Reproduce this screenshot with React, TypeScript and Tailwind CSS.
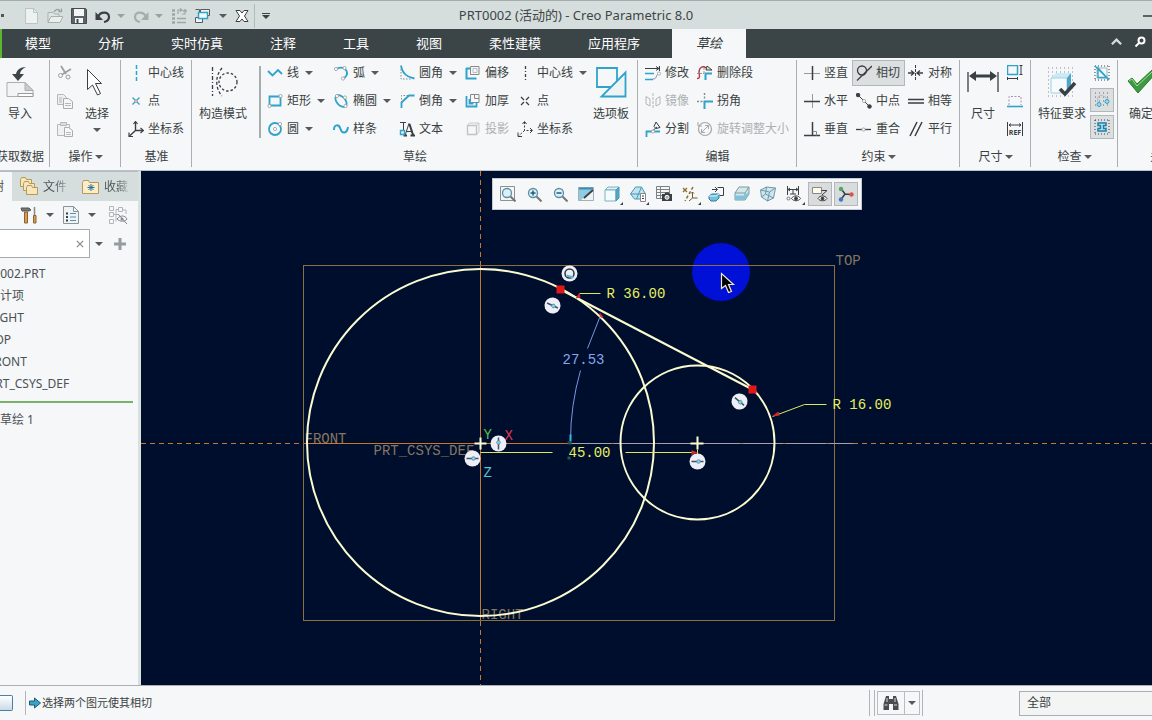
import * as React from "react";
import { clsx } from "clsx";

const BLUE = "#2fa3cc";
const INK = "#3a3f42";
const GREY = "#b3b7b9";

interface IconProps {
  className?: string;
  box?: number;
  children: React.ReactNode;
}

function Icon({ className = "size-4", box = 16, children }: IconProps) {
  return (
    <svg
      className={clsx("shrink-0", className)}
      viewBox={`0 0 ${box} ${box}`}
      fill="none"
      stroke={INK}
      aria-hidden="true"
    >
      {children}
    </svg>
  );
}

function Caret({ className = "text-[#555a5c]" }: { className?: string }) {
  return (
    <svg className={clsx("h-1 w-2 shrink-0", className)} viewBox="0 0 8 4" aria-hidden="true">
      <path d="M0 0h8L4 4z" fill="currentColor" />
    </svg>
  );
}

const dot = (x: number, y: number) => (
  <circle cx={x} cy={y} r="1.6" fill="#fff" stroke="#999" strokeWidth="0.8" />
);

const icons = {
  newFile: (
    <Icon><path d="M2.500.500h8l4 4v11h-12z" fill="#eef1f1" stroke="#bcc4c3" /><path d="M10.500.500v4h4" stroke="#bcc4c3" /></Icon>
  ),
  open: (
    <Icon>
      <path d="M1 14V4.500h5l1.500 1.500H12v3" stroke="#a9b1b0" fill="#dfe4e3" />
      <path d="M1 14.500l3-6h12l-3 6z" fill="#eceeed" stroke="#a9b1b0" />
      <path d="M7 4c1-3 4-3 6-1.500M14.500.5v3h-3" stroke="#9aa2a1" strokeWidth="1.300" />
    </Icon>
  ),
  save: (
    <Icon>
      <path d="M.5.5h14l1 1v14H.5z" fill="#5b6366" stroke="#454c4e" />
      <path d="M3 1h10v7H3z" fill="#f4f6f6" stroke="none" />
      <path d="M4 10h8v5H4z" fill="#f4f6f6" stroke="none" />
      <path d="M5.500 11h2v4h-2z" fill="#454c4e" stroke="none" />
    </Icon>
  ),
  undo: (
    <Icon><path d="M3 9C5 3.500 14 3 14 9c0 3-2 4.500-5 5" strokeWidth="2.200" /><path d="M.5 4v8H8z" fill={INK} stroke="none" /></Icon>
  ),
  redo: (
    <Icon><path d="M13 9C11 3.500 2 3 2 9c0 3 2 4.500 5 5" stroke="#a5adac" strokeWidth="2.200" /><path d="M15.500 4v8H8z" fill="#a5adac" stroke="none" /></Icon>
  ),
  regen: (
    <Icon>
      <path d="M1 2.500h3M1 6.500h3M1 10.500h3M1 14.500h3" stroke="#9fa7a6" strokeWidth="2.400" />
      <path d="M6 10.500h9M6 14.500h9" stroke="#9fa7a6" strokeWidth="1.500" />
      <path d="M7 6V2h3M9 .5L11 2 9 3.500M14 2v4h-3M16 3.500L14 1.500 12 3.500" stroke="#9fa7a6" strokeWidth="1.200" />
    </Icon>
  ),
  windows: (
    <Icon>
      <path d="M5.500 1.500h9v6h-9z" fill="#f1f4f4" stroke="#555c5e" />
      <path d="M.500 9.500h7v5h-7z" fill="#f1f4f4" stroke="#555c5e" />
      <path d="M.500 1.500h4v3" stroke="#555c5e" />
      <path d="M3.500 4.500h9v6h-9z" fill="#f8fbfb" stroke={BLUE} strokeWidth="1.500" />
    </Icon>
  ),
  closeWin: (
    <Icon>
      <path d="M2 2.500h4l2 2.500 2-2.500h4L10.500 8l3.500 5.500h-4L8 11l-2 2.500H2L5.500 8z" fill="#fff" stroke={INK} />
    </Icon>
  ),
  cut: (
    <Icon>
      <path d="M4 1l5 8M14 4L5 9.500" stroke="#9b9fa1" strokeWidth="1.800" />
      <circle cx="3.500" cy="10.500" r="2" stroke="#9b9fa1" /><circle cx="11" cy="12" r="2" stroke="#9b9fa1" />
    </Icon>
  ),
  copy: (
    <Icon>
      <path d="M.5 1.500h6l3 3v7h-9z" fill="#eee" stroke="#b5b9ba" />
      <path d="M6.500 5.500h5l4 3v7h-9z" fill="#f6f6f6" stroke="#a9adae" />
      <path d="M2 5h3M2 7h3M2 9h3M8 10.500h6M8 12.500h6" stroke="#b5b9ba" />
    </Icon>
  ),
  paste: (
    <Icon>
      <path d="M.5 3.500h12v11H.5z" fill="#f1f1f1" stroke="#b5b9ba" />
      <path d="M3.500 1.500h6v3h-6z" fill="#ddd" stroke="#b5b9ba" />
      <path d="M7.500 6.500h4l4 3v6h-8z" fill="#f8f8f8" stroke="#a9adae" />
      <path d="M9 11.500h5M9 13.500h5" stroke="#b5b9ba" />
    </Icon>
  ),
  centerBlue: <Icon><path d="M8.500 0v16" stroke={BLUE} strokeWidth="1.500" strokeDasharray="4 2" /></Icon>,
  pointBlue: (
    <Icon><path d="M4.500 4.500l7 7M11.500 4.500l-7 7" stroke={BLUE} strokeWidth="1.300" /><circle cx="8" cy="8" r="1.200" fill="#fff" stroke="#b77" strokeWidth="0.800" /></Icon>
  ),
  csys: (
    <Icon>
      <path d="M7.500 1v8.500H15M7.500 9.500L1.500 15" strokeWidth="1.400" />
      <path d="M5.500 3l2-2.500 2 2.500M12.500 7l3 2.500-3 2.500M1 11.500V15.500h4" strokeWidth="1.200" />
    </Icon>
  ),
  line: <Icon><path d="M1 6l4.500 4.500L11 5l4 4" stroke={BLUE} strokeWidth="1.800" /></Icon>,
  rect: <Icon><path d="M2.500 3.500h11v9h-11z" stroke={BLUE} strokeWidth="1.800" />{dot(13.500, 3)}{dot(2.500, 13)}</Icon>,
  circle: <Icon><circle cx="8" cy="8" r="6" stroke={BLUE} strokeWidth="1.800" />{dot(8, 8)}{dot(13, 3)}</Icon>,
  arc: <Icon><path d="M4 3.500C12 .5 18 8 10.500 13.500" stroke={BLUE} strokeWidth="1.800" />{dot(3, 4)}{dot(11.500, 3)}{dot(10, 13.500)}</Icon>,
  ellipse: (
    <Icon><ellipse cx="8" cy="8" rx="7" ry="4.200" transform="rotate(48 8 8)" stroke={BLUE} strokeWidth="1.800" />{dot(4, 3)}{dot(12, 4.500)}{dot(12.500, 13)}</Icon>
  ),
  spline: <Icon><path d="M1 9C1 3 6 3 7.500 8S14 13 15 6" stroke={BLUE} strokeWidth="2" /></Icon>,
  fillet: (
    <Icon><path d="M2 .5C3 8 7 12 15.500 13.500" stroke={BLUE} strokeWidth="1.800" /><path d="M2 4v10h10" strokeDasharray="1.500 1.500" stroke="#888" /></Icon>
  ),
  chamfer: (
    <Icon><path d="M15.500 2.500H10L2.500 9.500V15" stroke={BLUE} strokeWidth="1.800" /><path d="M9 2.500H2.500V9" strokeDasharray="1.500 1.500" stroke="#888" /></Icon>
  ),
  text: (
    <Icon>
      <path d="M1 1.500h6M4.500 1.500V9M6 14.500l4-12 4.500 12M7.500 10.500h6" strokeWidth="1" />
      <path d="M10.500 3l3.500 11M4.500 14.500h3.500M11.500 14.500h4.500" strokeWidth="2" />
      <path d="M1.500 9.500h4v4h-4z" fill="#dff0f6" stroke={BLUE} strokeWidth="1.400" />
    </Icon>
  ),
  offset: (
    <Icon><path d="M5.500 1.500h8.500v8H5.500z" stroke="#888" /><path d="M8 3.500h4v4H8z" stroke="#bbb" /><path d="M1.500 3v10.500h10M1 3.500h4" stroke={BLUE} strokeWidth="2" /></Icon>
  ),
  thicken: (
    <Icon><path d="M5.500 1.500h8.500v8H5.500zM9.500 1.500v4h4.500" stroke="#888" /><path d="M1.500 3v10.500h10V9M4.500 6v4.500h4" stroke={BLUE} strokeWidth="1.800" /></Icon>
  ),
  project: (
    <Icon><path d="M2.500 4.500h9v9h-9z" stroke="#c0c4c5" strokeWidth="1.400" /><path d="M2.500 4.500l2-2.500h9.500v9l-2.500 2.500M11.500 4.500L14 2" stroke="#c9cccd" /></Icon>
  ),
  center: <Icon><path d="M8.500 1v14" strokeDasharray="3 2 1 2" strokeWidth="1.300" /></Icon>,
  point: <Icon><path d="M4 4l3 3M12 4L9 7M4 12l3-3M12 12L9 9" strokeWidth="1.300" /></Icon>,
  csysDash: (
    <Icon>
      <path d="M7.500 1v8.500H15M7.500 9.500L1.500 15" strokeDasharray="2 1.500" />
      <path d="M5.500 3l2-2.500 2 2.500M13 7l2.500 2.500L13 12M1 11.500V15.500h4" />
    </Icon>
  ),
  modify: (
    <Icon>
      <path d="M0 3.500h14M14.500 1v5M11 1.500l3 2-3 2" />
      <path d="M0 8.500h9M0 14.500h8" stroke={BLUE} strokeWidth="1.700" />
      <path d="M8 14c5 0 2-5 6-5" stroke="#888" />{dot(14, 8.500)}
    </Icon>
  ),
  mirror: (
    <Icon><path d="M1 3.500l4 2.500v7l-4-2zM15 3.500L11 6v7l4-2z" stroke={GREY} /><path d="M8 0v16" stroke={GREY} strokeDasharray="3 1" /></Icon>
  ),
  divide: (
    <Icon><path d="M1.500 16v-5.500H15" stroke={BLUE} strokeWidth="1.800" /><path d="M6 11l6-5M9 5.500l2-4.500 4 5.500-4 1z" />{dot(8, 10.500)}</Icon>
  ),
  delSeg: (
    <Icon>
      <path d="M0 13.500c4 0 2-4 2-6C2 2 6 .5 9 3" stroke="#a8323c" strokeWidth="1.300" />
      <path d="M9 5l1-4 5 4z" fill="#f7e4c4" />
      <path d="M8.500 15V8.500H15" stroke={BLUE} strokeWidth="2" /><path d="M0 8.500h7M7 3v5" stroke="#999" strokeDasharray="2 1" />
    </Icon>
  ),
  corner: (
    <Icon><path d="M7.500 16V8.500H16" stroke={BLUE} strokeWidth="2" /><path d="M0 8.500h6M7.500 0v7" stroke="#888" strokeDasharray="2 1.500" strokeWidth="1.400" /></Icon>
  ),
  rotate: (
    <Icon><circle cx="8" cy="8" r="6.500" stroke="#a5a9ab" strokeWidth="1.200" /><path d="M4.500 11.500l7-7M8 4.500h3.500V8M4.500 8v3.500H8M1 1v4h4" stroke="#a5a9ab" /></Icon>
  ),
  vertical: <Icon><path d="M0 8.500h16" stroke="#999" /><path d="M8.500 1v14" strokeWidth="1.500" /></Icon>,
  horizontal: <Icon><path d="M8.500 1v14" stroke="#999" /><path d="M0 8.500h16" strokeWidth="1.500" /></Icon>,
  perp: <Icon><path d="M8.500 1v13.500M0 14.500h16" strokeWidth="1.500" /><path d="M8.500 10.500h4v4" stroke="#888" /></Icon>,
  tangent: <Icon><circle cx="6" cy="5.500" r="4.500" strokeWidth="1.300" /><path d="M1 15.500L16 1" strokeWidth="1.300" /></Icon>,
  midpoint: (
    <Icon><path d="M2 2l12 12" /><circle cx="2" cy="2" r="1.800" fill={INK} /><circle cx="13.500" cy="13.500" r="1.800" fill={INK} />{dot(8, 8)}</Icon>
  ),
  coincident: <Icon><path d="M0 8.500h15" strokeWidth="1.300" />{dot(7.500, 8.500)}</Icon>,
  symmetric: (
    <Icon><path d="M7.500 0v16" strokeDasharray="3 1" /><path d="M0 8h5M15 8h-5M3 5.500L6 8l-3 2.500M12 5.500L9 8l3 2.500" strokeWidth="1.300" /></Icon>
  ),
  equal: <Icon><path d="M0 6.500h16M0 10h16" strokeWidth="1.500" /></Icon>,
  parallel: <Icon><path d="M2 15L9 1M7 15l7-14" strokeWidth="1.500" /></Icon>,
  perimeter: (
    <Icon><path d="M.5.500h10v9H.500z" stroke={BLUE} strokeWidth="1.500" /><path d="M14 .500v9M12.500.500h3M12.500 9.500h3M.500 13.500h10M.500 12v3M10.500 12v3" /></Icon>
  ),
  baseline: (
    <Icon><path d="M2 12V3.500h12V12" stroke="#a78fb8" strokeDasharray="2 1.500" /><path d="M0 13.500h16" stroke={BLUE} strokeWidth="1.600" /></Icon>
  ),
  ref: (
    <Icon>
      <path d="M.5 1v14M15.500 1v14M2 4h12M4 2.500L2 4l2 1.500M12 2.500L14 4l-2 1.500" />
      <text x="8" y="14" textAnchor="middle" fontSize="7" fontWeight="700" fill={INK} stroke="none">REF</text>
    </Icon>
  ),
  shade: (
    <Icon><path d="M1 1h14M1 15h14M1 1v14M15 1v14" strokeDasharray="1 2" /><path d="M3 3h10v10H3z" stroke="#9bb8c4" /><path d="M4 3v9.500h9zM1 1l14 14" stroke={BLUE} strokeWidth="1.400" /></Icon>
  ),
  openEnds: (
    <Icon>
      <path d="M1 1h14M1 5h14M1 9h14M1 13h14" stroke="#666" strokeDasharray="1 3" />
      <path d="M5 12C1 6 6 2 9 4s5 1 5 5" stroke="#aeb6ba" />
      <circle cx="5" cy="12.500" r="2" fill="#9fd8ee" stroke={BLUE} /><circle cx="13" cy="9.500" r="2" fill="#9fd8ee" stroke={BLUE} />
    </Icon>
  ),
  overlap: (
    <Icon>
      <path d="M1 1h14M1 15h14M1 1v14M15 1v14" strokeDasharray="1 2" />
      <path d="M4 4h8v2.500H9.500v3H12V12H4V9.500h2.500v-3H4z" fill="#bfe6f4" stroke="#1b7fa8" strokeWidth="1.500" />
    </Icon>
  ),
};

const lens = (
  <>
    <circle cx="7" cy="7" r="4.500" fill="#d9f1f8" stroke="#5d8ea3" strokeWidth="1.300" />
    <path d="M10.500 10.500l5 5" stroke="#777" strokeWidth="2" />
  </>
);

const viewTools = [
  { name: "重新调整", icon: <Icon><path d="M.5.500h14v14H.500z" fill="#f5f7f7" stroke="#8b9194" />{lens}</Icon> },
  { name: "放大", icon: <Icon>{lens}<path d="M4.500 7h5M7 4.500v5" stroke="#1d5f7c" strokeWidth="1.500" /></Icon> },
  { name: "缩小", icon: <Icon>{lens}<path d="M4.500 7h5" stroke="#1d5f7c" strokeWidth="1.500" /></Icon> },
  {
    name: "重画",
    icon: <Icon><path d="M.5 1.500h15v13H.500z" fill="#8fcbe2" stroke="#a3b0b5" /><path d="M15 4v10H3z" fill="#eef3f4" stroke="none" /><path d="M6 12L15 4" strokeWidth="1.800" /><path d="M1 2.500h14" stroke="#3d8db0" strokeWidth="2" /></Icon>,
  },
  {
    name: "显示样式", more: true,
    icon: <Icon><path d="M1 4l3-3h11l-3 3z" fill="#d9f1f8" stroke="#7fb2c5" /><path d="M1 4h11v11H1z" fill="#f3fbfd" stroke="#7fb2c5" /><path d="M12 4l3-3v11l-3 3z" fill="#55a9c8" stroke="#4897b5" /></Icon>,
  },
  {
    name: "已保存方向", more: true,
    icon: <Icon><path d="M.500 8l5-7h6l4 7-3 5h-8z" fill="#bfe4f0" stroke="#4a96b3" /><path d="M.500 8h8l3-7M8.500 8l-2 5M8.500 8h7" stroke="#4a96b3" /><path d="M10.500 7.500h5v8h-5z" fill="#fff" stroke="#888" /><path d="M12 10h2M12 12.500h2" /></Icon>,
  },
  {
    name: "视图管理器",
    icon: <Icon><path d="M.500.500h13v12H.500zM.500 3.500h13M.500 6.500h13M.500 9.500h13M4.500.500v12" fill="#f5f5f5" stroke="#7b8184" /><path d="M6 8h2.500l1-1.500h3l1 1.500H16v7H6z" fill={INK} stroke="none" /><circle cx="11" cy="11.300" r="2" fill="#aaa" stroke="#fff" /></Icon>,
  },
  {
    name: "基准显示", more: true,
    icon: <Icon><path d="M1 2l4 4M5 2L1 6" stroke="#8a6d2f" strokeWidth="1.300" /><path d="M11 1L3 15" stroke="#8a6d2f" strokeDasharray="3 2" strokeWidth="1.500" /><path d="M10.500 6v6h5M10.500 12L7 15M9 7.500L10.500 6 12 7.500" stroke="#6e5a2a" /></Icon>,
  },
  {
    name: "草绘视图",
    icon: <Icon><path d="M9.500 1.500h6v8h-4M4 3.500h5M7 1l2.500 2.500L7 6" /><path d="M1 10l3-2h7v4l-3 3H3l-2-2z" fill="#73c1dc" stroke="#2f7f9e" /><path d="M1 10h7l3-2" stroke="#e4f6fb" /></Icon>,
  },
  {
    name: "剖面",
    icon: <Icon><path d="M1 7l4-6h10v7l-4 6H1z" fill="#d3e7ed" stroke="#8199a2" /><path d="M1 7h10l4-6M11 7v7" stroke="#8199a2" /><path d="M1 9.500h10L15 5v3.500L11 14H1z" fill="#7fc3da" stroke="none" /></Icon>,
  },
  {
    name: "透视图",
    icon: <Icon><path d="M.500 4l6-3 9 1-2 10-6 3-6-4z" fill="#cfe4eb" stroke="#6d9aab" /><path d="M.500 4l9 2 6-4M9.500 6l-2 9M6.500 1l-1 7 8 4M5.500 8l-4 3" stroke="#6d9aab" /></Icon>,
  },
  {
    name: "草绘器显示", more: true,
    icon: <Icon><path d="M1.500 0v9M12.500 0v9M2 3.500h10M4 2L2 3.500 4 5M10 2l2 1.500L10 5M4 8h6M7 4v4" /><path d="M5.500 12.500c2-3.500 7-3.500 9 0-2 3-7 3-9 0z" fill="#fff" /><circle cx="10" cy="12.500" r="1.500" fill={INK} /><circle cx="2.500" cy="12.500" r="1.500" stroke="#777" /></Icon>,
  },
  {
    name: "注释显示", active: true,
    icon: <Icon><path d="M.500 1.500h9v6h-9z" fill="#fffbe8" stroke="#888" /><path d="M9.500 4.500H15L10 9" /><path d="M6 12.500c2-3.500 7-3.500 9 0-2 3-7 3-9 0z" fill="#fff" /><circle cx="10.500" cy="12.500" r="1.500" fill={INK} /></Icon>,
  },
  {
    name: "旋转中心", active: true,
    icon: <Icon><path d="M3 2.500l4 5.500 6 .500M7 8l-4 5.500" strokeWidth="1.500" /><circle cx="3" cy="3" r="2.200" fill="#4fa85c" stroke="none" /><circle cx="13.500" cy="8.500" r="2.200" fill="#d8564c" stroke="none" /><circle cx="3" cy="13.500" r="2.200" fill="#3f77c4" stroke="none" /></Icon>,
  },
];

interface ToolProps {
  icon: React.ReactNode;
  label: string;
  caret?: boolean;
  active?: boolean;
  disabled?: boolean;
}

function Tool({ icon, label, caret, active, disabled }: ToolProps) {
  return (
    <button
      type="button"
      disabled={disabled}
      className={clsx(
        "-ml-1 flex h-[26px] items-center gap-1 self-center justify-self-start border pr-1 pl-[3px] text-xs whitespace-nowrap",
        active ? "border-[#b3b7b9] bg-[#dcdfe0]" : "border-transparent",
        disabled ? "text-[#adb1b3]" : "text-[#3a3f42]",
      )}
    >
      {icon}
      {label}
      {caret && <span className="ml-[2px] flex"><Caret /></span>}
    </button>
  );
}

function Column({ className, children }: { className?: string; children: React.ReactNode }) {
  return <div className={clsx("grid shrink-0 grid-rows-3", className)}>{children}</div>;
}

interface GroupProps {
  title: string;
  caret?: boolean;
  className: string;
  last?: boolean;
  children: React.ReactNode;
}

function Group({ title, caret, className, last, children }: GroupProps) {
  return (
    <section aria-label={title} className={clsx("relative flex shrink-0 flex-col", className)}>
      <div className="flex h-21 w-full shrink-0">{children}</div>
      <div className="flex w-full flex-1 items-center justify-center gap-[2px] text-xs whitespace-nowrap">
        {title}
        {caret && <Caret />}
      </div>
      {!last && <span className="absolute top-px right-0 h-[107px] w-px bg-[#aab0b1]" />}
    </section>
  );
}

function BigTool({ icon, label, caret, className }: { icon: React.ReactNode; label: string; caret?: boolean; className?: string }) {
  return (
    <button type="button" className={clsx("flex h-full shrink-0 flex-col items-center pt-[3px] text-xs whitespace-nowrap", className)}>
      <span className="flex h-10 items-center">{icon}</span>
      <span className="leading-6">{label}</span>
      {caret && <span className="mt-[2px] flex"><Caret /></span>}
    </button>
  );
}

function TitleBar() {
  const quick = "flex items-center justify-center";
  return (
    <header className="grid h-[29px] shrink-0 grid-cols-[1fr_auto_1fr] items-center border-t border-[#a4abaa] bg-[#d5dedc] pt-px">
      <div className="flex items-center">
        <span className="ml-px size-[3px] bg-[#555]" />
        <button type="button" aria-label="新建" className={clsx(quick, "ml-[19px] w-4")}>{icons.newFile}</button>
        <button type="button" aria-label="打开" className={clsx(quick, "ml-2 w-4")}>{icons.open}</button>
        <button type="button" aria-label="保存" className={clsx(quick, "ml-2 w-4")}>{icons.save}</button>
        <button type="button" aria-label="撤消" className={clsx(quick, "ml-2 gap-[6px]")}>{icons.undo}<Caret className="text-[#9aa1a0]" /></button>
        <button type="button" aria-label="重做" className={clsx(quick, "ml-2 gap-[6px]")}>{icons.redo}<Caret className="text-[#9aa1a0]" /></button>
        <button type="button" aria-label="重新生成" className={clsx(quick, "ml-2 w-4")}>{icons.regen}</button>
        <button type="button" aria-label="窗口" className={clsx(quick, "ml-2 gap-2")}>{icons.windows}<Caret /></button>
        <button type="button" aria-label="关闭" className={clsx(quick, "ml-[7px] w-4")}>{icons.closeWin}</button>
        <span className="ml-1 h-6 w-px bg-[#b3bbba]" />
        <button type="button" aria-label="自定义快速访问工具栏" className={clsx(quick, "ml-[7px] flex-col gap-px")}>
          <span className="h-px w-2 bg-[#3a3f42]" />
          <Caret className="text-[#3a3f42]" />
        </button>
      </div>
      <h1 className="text-[13px] text-[#3e4547]">PRT0002 (活动的) - Creo Parametric 8.0</h1>
      <button type="button" aria-label="最小化" className="flex h-5 w-3 items-center justify-end justify-self-end">
        <span className="h-[2px] w-[9px] bg-[#5c6365]" />
      </button>
    </header>
  );
}

const tabs = ["模型", "分析", "实时仿真", "注释", "工具", "视图", "柔性建模", "应用程序"];

function RibbonTabs() {
  return (
    <nav className="flex h-[29px] shrink-0 bg-[#3b4446] text-[13px] text-white">
      <span className="w-[2px] bg-[#5cb531]" />
      {tabs.map((tab) => (
        <button key={tab} type="button" className="pt-px pr-6 pl-[23px] whitespace-nowrap">{tab}</button>
      ))}
      <button type="button" className="ml-2 w-[74px] bg-[#f5f7f8] pt-px text-[#33393b] italic">草绘</button>
      <div className="ml-auto flex items-center gap-3 pr-[6px]">
        <button type="button" aria-label="最小化功能区" className="pb-1">
          <Icon className="h-3 w-[11px]" box={12}><path d="M1 8.500l5-5 5 5" stroke="#d8dcdc" strokeWidth="2.500" /></Icon>
        </button>
        <button type="button" aria-label="命令搜索" className="pb-1">
          <Icon className="size-3" box={12}><circle cx="7.500" cy="4.500" r="3" stroke="#fff" strokeWidth="2" /><path d="M5 7L1.500 10.500" stroke="#fff" strokeWidth="2" /></Icon>
        </button>
      </div>
    </nav>
  );
}

function Ribbon() {
  return (
    <div className="flex h-[113px] shrink-0 overflow-hidden border-b border-[#b9c3d0] bg-[#f5f7f8] pt-px text-[#3a3f42]">
      <Group title="获取数据" className="w-[50px] items-end [&>div]:justify-end [&>div]:pr-[6px]">
        <BigTool
          label="导入"
          className="pr-2"
          icon={
            <Icon className="size-8" box={32}>
              <path d="M3 16.500h18l8 8v6H3z" fill="#f3f4f4" stroke="#aaafb1" /><path d="M21 16.500v8h8z" fill="#ccc" stroke="#aaafb1" />
              <path d="M14 27.500h15v3H14z" fill="#fff" stroke="#999" />
              <path d="M22 1c-6 0-9 3-10 7H8l6 7 6-7h-4c0-3 2-5 6-7z" fill="#3f4446" stroke="none" />
            </Icon>
          }
        />
      </Group>
      <Group title="操作" caret className="w-[71px]">
        <Column className="ml-[7px] w-[26px] items-center">
          {icons.cut}{icons.copy}{icons.paste}
        </Column>
        <BigTool
          label="选择"
          caret
          icon={<Icon className="size-7" box={28}><path d="M4.500 1.500v20l5-4.500 5 10 3-1.500-5-10h6z" fill="#fff" /></Icon>}
        />
      </Group>
      <Group title="基准" className="w-[71px]">
        <Column className="ml-[7px]">
          <Tool icon={icons.centerBlue} label="中心线" />
          <Tool icon={icons.pointBlue} label="点" />
          <Tool icon={icons.csys} label="坐标系" />
        </Column>
      </Group>
      <Group title="草绘" className="w-[446px]">
        <BigTool
          label="构造模式"
          className="ml-[7px]"
          icon={
            <Icon className="size-8" box={32}>
              <path d="M5.500 1v29" strokeDasharray="4 2 1 2" strokeWidth="1.300" /><path d="M15 2c-7 8-7 20 0 28" strokeDasharray="3 2" strokeWidth="1.300" />
              <circle cx="21" cy="16" r="9" strokeDasharray="2.500 2" strokeWidth="1.300" />
            </Icon>
          }
        />
        <span className="mx-[6px] mt-[7px] ml-3 h-18 w-[2px] bg-[#a7acae]" />
        <Column className="w-[66px]">
          <Tool icon={icons.line} label="线" caret />
          <Tool icon={icons.rect} label="矩形" caret />
          <Tool icon={icons.circle} label="圆" caret />
        </Column>
        <Column className="w-[66px]">
          <Tool icon={icons.arc} label="弧" caret />
          <Tool icon={icons.ellipse} label="椭圆" caret />
          <Tool icon={icons.spline} label="样条" />
        </Column>
        <Column className="w-[66px]">
          <Tool icon={icons.fillet} label="圆角" caret />
          <Tool icon={icons.chamfer} label="倒角" caret />
          <Tool icon={icons.text} label="文本" />
        </Column>
        <Column className="w-[52px]">
          <Tool icon={icons.offset} label="偏移" />
          <Tool icon={icons.thicken} label="加厚" />
          <Tool icon={icons.project} label="投影" disabled />
        </Column>
        <Column className="w-[76px]">
          <Tool icon={icons.center} label="中心线" caret />
          <Tool icon={icons.point} label="点" />
          <Tool icon={icons.csysDash} label="坐标系" />
        </Column>
        <BigTool
          label="选项板"
          icon={
            <Icon className="size-8" box={32}>
              <path d="M2 2h20v19H2z" stroke={BLUE} strokeWidth="1.800" /><path d="M30.500 6.500v24h-24z" fill="#eef4f6" stroke={BLUE} strokeWidth="1.800" />
            </Icon>
          }
        />
      </Group>
      <Group title="编辑" className="w-[159px]">
        <Column className="ml-[7px] w-[52px]">
          <Tool icon={icons.modify} label="修改" />
          <Tool icon={icons.mirror} label="镜像" disabled />
          <Tool icon={icons.divide} label="分割" />
        </Column>
        <Column>
          <Tool icon={icons.delSeg} label="删除段" />
          <Tool icon={icons.corner} label="拐角" />
          <Tool icon={icons.rotate} label="旋转调整大小" disabled />
        </Column>
      </Group>
      <Group title="约束" caret className="w-[163px]">
        <Column className="ml-[7px] w-[52px]">
          <Tool icon={icons.vertical} label="竖直" />
          <Tool icon={icons.horizontal} label="水平" />
          <Tool icon={icons.perp} label="垂直" />
        </Column>
        <Column className="w-[52px]">
          <Tool icon={icons.tangent} label="相切" active />
          <Tool icon={icons.midpoint} label="中点" />
          <Tool icon={icons.coincident} label="重合" />
        </Column>
        <Column>
          <Tool icon={icons.symmetric} label="对称" />
          <Tool icon={icons.equal} label="相等" />
          <Tool icon={icons.parallel} label="平行" />
        </Column>
      </Group>
      <Group title="尺寸" caret className="w-[71px]">
        <BigTool
          label="尺寸"
          className="ml-[7px]"
          icon={
            <Icon className="size-8" box={32}>
              <path d="M1 6v20M31 6v20" strokeWidth="1.300" /><path d="M6 10h20" strokeWidth="3" />
              <path d="M2 10l7-5v10zM30 10l-7-5v10z" fill={INK} stroke="none" />
            </Icon>
          }
        />
        <Column className="ml-2 items-center">
          {icons.perimeter}{icons.baseline}{icons.ref}
        </Column>
      </Group>
      <Group title="检查" caret className="w-[87px]">
        <BigTool
          label="特征要求"
          className="ml-[7px]"
          icon={
            <Icon className="size-8" box={32}>
              <path d="M2 2h28M2 6h28M2 10h28M2 14h28M2 18h28M2 22h28M2 26h28M2 30h28" stroke="#8c86b0" strokeDasharray="1 3" />
              <path d="M5 12l5-5h15l-4 5z" fill="#c9ebf5" stroke="none" /><path d="M5 12h16v15H5z" fill="#f6fcfd" stroke="#a3cfdd" /><path d="M21 12l4-5v15l-4 5z" fill="#4ba6c8" stroke="none" />
              <path d="M14 23l5 5 10-11" strokeWidth="3.500" />
            </Icon>
          }
        />
        <div className="ml-1 flex flex-col gap-[3px] pt-[2px]">
          <button type="button" aria-label="着色封闭环" className="flex size-6 items-center justify-center">{icons.shade}</button>
          <button type="button" aria-label="突出显示开放端" className="flex size-6 items-center justify-center border border-[#b3b7b9] bg-[#dcdfe0]">{icons.openEnds}</button>
          <button type="button" aria-label="重叠几何" className="flex size-6 items-center justify-center border border-[#b3b7b9] bg-[#dcdfe0]">{icons.overlap}</button>
        </div>
      </Group>
      <Group title="关闭" last className="min-w-[88px] flex-1">
        <BigTool
          label="确定"
          className="ml-[7px]"
          icon={<Icon className="size-8" box={32}><path d="M3 15l4-3 5 6L27 4l4 3-18 20z" fill="#3c9a45" stroke="#2a7a34" /><path d="M4 15l3-2 5 7L27 6" stroke="#9fdc8a" /></Icon>}
        />
      </Group>
    </div>
  );
}

const treeRows = [
  { label: "PRT0002.PRT", indent: "-ml-7" },
  { label: "设计项", indent: "-ml-3" },
  { label: "RIGHT", indent: "-ml-3" },
  { label: "TOP", indent: "-ml-3" },
  { label: "FRONT", indent: "-ml-3" },
  { label: "PRT_CSYS_DEF", indent: "-ml-3" },
];

function Folder({ x, y }: { x: number; y: number }) {
  return <path transform={`translate(${x} ${y})`} d="M.5 2.500l1-2h4l1 2h5v7H.500z" fill="#f8e6b8" stroke="#b59a5c" />;
}

function ModelTree() {
  return (
    <aside className="flex w-[141px] shrink-0 flex-col overflow-hidden border-r-[3px] border-[#d9e1df] bg-[#f5f7f8] text-xs text-[#4b5154]">
      <div className="flex h-[30px] shrink-0 border-t border-[#b4bbba] bg-[#d5dedc]">
        <button type="button" className="flex w-3 items-center justify-end overflow-hidden bg-[#f5f7f8] pr-2 whitespace-nowrap">模型树</button>
        <button type="button" className="ml-2 flex w-[46px] items-center gap-1 overflow-hidden whitespace-nowrap">
          <Icon className="size-[19px]" box={19}><Folder x={0} y={0} /><Folder x={3} y={4} /><Folder x={6} y={8} /></Icon>
          <span className="bg-linear-to-r from-[#4b5154] from-50% to-[#b5bdbb] bg-clip-text text-transparent">文件</span>
        </button>
        <button type="button" className="ml-4 flex w-[46px] items-center gap-1 overflow-hidden whitespace-nowrap">
          <Icon className="size-[18px]" box={18}>
            <path d="M.500 4.500l1-2h5l1 2h9v11H.500z" fill="#fbedc8" stroke="#b59a5c" />
            <path d="M9 6v7M5.500 9.500h7M6.500 7l5 5M11.500 7l-5 5" stroke="#2b6f9a" />
          </Icon>
          <span className="bg-linear-to-r from-[#4b5154] from-50% to-[#b5bdbb] bg-clip-text text-transparent">收藏</span>
        </button>
      </div>
      <div className="flex h-7 shrink-0 items-center pl-5">
        <button type="button" aria-label="设置" className="flex items-center gap-2">
          <Icon className="size-[18px]" box={18}>
            <path d="M1 2h8l2 2-2 1H2z" fill="#777" stroke="#555" /><path d="M4.500 6h3v11h-3z" fill="#d99b52" stroke="#8d6531" />
            <path d="M14.500 1v8" stroke="#888" strokeWidth="1.500" /><path d="M13.500 9.500h2.500v7.500h-2.500z" fill="#d99b52" stroke="#8d6531" />
          </Icon>
          <Caret />
        </button>
        <button type="button" aria-label="显示" className="ml-2 flex items-center gap-2">
          <Icon className="size-[18px]" box={18}>
            <path d="M1.500.500h10l5 5v12h-15z" fill="#eef3f6" stroke="#8b9499" /><path d="M11.500.500v5h5" stroke="#8b9499" />
            <path d="M8 7.500h6M8 11h6M8 14.500h6" stroke="#5b8fb0" /><path d="M4 7.500h2M4 11h2M4 14.500h2" strokeWidth="2" />
          </Icon>
          <Caret />
        </button>
        <button type="button" aria-label="树过滤器" className="ml-3">
          <Icon className="size-5" box={20}>
            <path d="M1.500 1.500h4v4h-4zM1.500 7.500h4v4h-4zM1.500 14.500h4v4h-4zM10.500 2.500h4v4h-4zM5.500 9.500h5M8 4.500v12M8 4.500h2M15 5h3v4" stroke="#b2b6b8" />
            <path d="M9 14c3-4 8-4 10 0-2 3-7 3-10 0zM10 9l9 10" stroke="#85898b" /><circle cx="14" cy="14" r="1.500" fill="#85898b" stroke="none" />
          </Icon>
        </button>
      </div>
      <div className="flex h-[29px] shrink-0 items-center">
        <div className="flex h-full w-[90px] items-center border border-l-0 border-[#a5abad] bg-white">
          <input aria-label="搜索模型树" className="h-full min-w-0 flex-1 outline-none" />
          <button type="button" aria-label="清除" className="mr-[5px]">
            <Icon className="size-2" box={10}><path d="M1 1l8 8M9 1L1 9" stroke="#888" strokeWidth="1.500" /></Icon>
          </button>
        </div>
        <button type="button" aria-label="搜索选项" className="ml-[5px]"><Caret /></button>
        <button type="button" aria-label="添加" className="ml-[11px]">
          <Icon className="size-3" box={12}><path d="M6 0v12M0 6h12" stroke="#969b9d" strokeWidth="3" /></Icon>
        </button>
      </div>
      <ul className="pt-[5px]">
        {treeRows.map((row) => (
          <li key={row.label} className={clsx("h-[22px] leading-[22px] whitespace-nowrap", row.indent)}>{row.label}</li>
        ))}
      </ul>
      <div className="mt-[6px] mr-[5px] h-[2px] shrink-0 bg-[#79b36b]" />
      <p className="mt-[6px] leading-[22px] whitespace-nowrap">草绘 1</p>
    </aside>
  );
}

// Round constraint glyph with a small bar turned to the constraint's direction
function Constraint({ x, y, angle }: { x: number; y: number; angle: number }) {
  return (
    <g transform={`translate(${x} ${y}) rotate(${angle})`}>
      <circle r="8" fill="#eceef8" />
      <path d="M-6 0H6" stroke="#46505a" strokeWidth="1.500" />
      <circle cx="1" r="1.800" fill="#8fd0e4" stroke="#4b8aa0" strokeWidth="0.800" />
    </g>
  );
}

// All coordinates are relative to the part's coordinate system origin
function Sketch() {
  return (
    <svg className="block h-full w-full" aria-label="草绘" fontFamily='"Liberation Mono", monospace' fontSize="14">
      <g transform="translate(339.5 272.5)" fill="none">
        <circle cx="240.500" cy="-171.500" r="29" fill="#0010d6" />

        <g stroke="#c9762f" shapeRendering="crispEdges">
          <path d="M-340 0H-177M372 0H2000" strokeDasharray="5 4" />
          <path d="M0-273V-178M0 177V1200" strokeDasharray="5 4" />
          <path d="M-177 0H372M0-178V177" />
        </g>
        <path d="M-177-178H354V177H-177z" stroke="#8a713f" shapeRendering="crispEdges" />
        <path d="M90 0H372" stroke="#a79eae" strokeDasharray="40 3" shapeRendering="crispEdges" />

        <g fill="#857660">
          <text x="355" y="-179">TOP</text>
          <text x="-176" y="-1">FRONT</text>
          <text x="-107" y="11">PRT_CSYS_DEF</text>
          <text x="1" y="175">RIGHT</text>
        </g>

        <g stroke="#fbfbd0" strokeWidth="2">
          <circle cx="0" cy="-1" r="173.500" />
          <circle cx="217" cy="-1" r="77" />
          <path d="M80-154L272-54" />
          <path d="M-6 0H6M0-6V6M210 0H223M217-7V6" />
        </g>
        <path d="M76-158h8v8h-8zM268-58h8v8h-8z" fill="#e01818" />

        <g stroke="#dce85c">
          <path d="M0 9H72M145 9H214M217 6V12" />
          <path d="M99-150H120M292-27L324-39H346" />
        </g>
        <g fill="#d42a2a">
          <path d="M217 9l-6-2.500v5zM291-27l7-5 1 4z" />
          <path d="M95-145l4-6 1 5z" />
        </g>
        <path d="M90-3Q90-38 100-73M107-95L120-128" stroke="#7598e0" />
        <path d="M119-130l3 4" stroke="#d42a2a" strokeWidth="2" />
        <path d="M90-9V-2" stroke="#35b7e8" strokeWidth="2" />
        <path d="M87-2h4v3h-4zM87 13h3v3h-3z" fill="#235a4c" />

        <g fill="#e6ef62">
          <text x="126" y="-146">R 36.00</text>
          <text x="352" y="-35">R 16.00</text>
          <text x="88" y="13">45.00</text>
        </g>
        <text x="82" y="-80" fill="#86a6ec">27.53</text>
        <text x="3" y="-5" fill="#4fc24f">Y</text>
        <text x="24" y="-4" fill="#e0344c">X</text>
        <text x="3" y="33" fill="#4fc6dc">Z</text>

        <g transform="translate(89 -170)">
          <circle r="8" fill="#eceef8" />
          <circle r="4.500" stroke="#2f3538" strokeWidth="1.500" />
          <path d="M-3 2L4 4" stroke="#5fb8d4" strokeWidth="2" />
        </g>
        <Constraint x={72} y={-138} angle={25} />
        <Constraint x={259} y={-42} angle={40} />
        <Constraint x={217} y={18} angle={0} />
        <Constraint x={-8} y={15} angle={0} />
        <Constraint x={18} y={0} angle={-90} />

        <path d="M241-170v15l4-3 3 7 3-1-3-7h5z" fill="#000" stroke="#f3eccb" strokeWidth="1.200" />
      </g>
    </svg>
  );
}

function Canvas() {
  return (
    <main className="relative min-w-0 flex-1 overflow-hidden bg-[#000e2d]">
      <Sketch />
      <div role="toolbar" aria-label="视图工具" className="absolute top-[7px] left-[351px] flex h-8 items-center border border-[#c5cacc] bg-[#f5f7f8] px-[2px]">
        {viewTools.map((tool) => (
          <button
            key={tool.name}
            type="button"
            aria-label={tool.name}
            className={clsx(
              "relative mx-px flex size-6 items-center justify-center border",
              tool.active ? "border-[#b3b7b9] bg-[#d9dcdd]" : "border-transparent",
            )}
          >
            {tool.icon}
            {tool.more && <span className="absolute right-0 bottom-0 border-b-3 border-l-3 border-b-[#3a3f42] border-l-transparent" />}
          </button>
        ))}
      </div>
    </main>
  );
}

function StatusBar() {
  return (
    <footer className="flex h-[35px] shrink-0 items-center overflow-hidden border-t border-[#aab0b2] bg-[#f5f7f8] text-[#3a3f42]">
      <button type="button" aria-label="导航器" className="h-4 w-[13px] rounded-r-xs border border-l-0 border-[#4e7f9c] bg-linear-to-b from-white to-[#c9dbe8]" />
      <span className="ml-3 h-6 w-px bg-[#b0b5b7]" />
      <Icon className="ml-[3px] size-3" box={12}><path d="M.5 4h5V1l6 5-6 5V8h-5z" fill="#3aa1c8" stroke="#1d5a78" /></Icon>
      <p className="ml-px text-[11px] whitespace-nowrap">选择两个图元使其相切</p>
      <div className="ml-auto flex h-[26px] shrink-0 gap-1">
        <span className="w-px bg-[#b0b5b7]" />
        <span className="w-px bg-[#b0b5b7]" />
        <div className="-ml-[2px] flex items-center">
          <button type="button" aria-label="查找" className="flex h-6 w-7 items-center justify-center border border-[#b9bdbf]">
            <Icon className="size-4">
              <path d="M3 1h3v3h4V1h3l2.500 8v6H10V9H6v6H.500V9z" fill="#4a4d4f" stroke="none" />
              <path d="M1.500 10h3M11 10h3M4 3v4M12 3v4" stroke="#aaa" strokeWidth="1.500" />
            </Icon>
          </button>
          <button type="button" aria-label="查找选项" className="flex h-6 w-[15px] items-center justify-center border border-l-0 border-[#b9bdbf]"><Caret /></button>
        </div>
        <span className="-ml-[2px] w-px bg-[#b0b5b7]" />
      </div>
      <select aria-label="选择过滤器" className="ml-24 h-[25px] w-[133px] shrink-0 appearance-none border border-r-0 border-[#aab0b2] bg-[#f3f5f5] pl-[7px] text-xs">
        <option>全部</option>
      </select>
    </footer>
  );
}

export default function App() {
  return (
    <div className='flex h-screen flex-col overflow-hidden font-["Noto_Sans","Noto_Sans_CJK_SC",sans-serif]'>
      <TitleBar />
      <RibbonTabs />
      <Ribbon />
      <div className="flex min-h-0 flex-1">
        <ModelTree />
        <Canvas />
      </div>
      <StatusBar />
    </div>
  );
}
